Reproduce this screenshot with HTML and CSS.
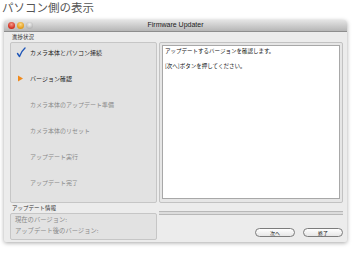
FILE: index.html
```html
<!DOCTYPE html>
<html lang="ja">
<head>
    <meta charset="UTF-8">
    <meta name="viewport" content="width=device-width, initial-scale=1.0">
    <title>パソコン側の表示</title>
    <link rel="stylesheet" href="styles.css">
</head>
<body>
    <h1 class="heading">パソコン側の表示</h1>

    <div class="window">
        <div class="titlebar">
            <div class="lights">
                <span class="light red"></span>
                <span class="light yellow"></span>
                <span class="light gray"></span>
            </div>
            <span class="title">Firmware Updater</span>
        </div>

        <div class="content">
            <div class="group-label">進捗状況</div>
            <div class="main">
                <ul class="steps">
                    <li class="step done">
                        <svg class="mark" width="10" height="11" viewBox="0 0 10 11">
                            <path d="M1.5 6.5 L3.5 9.5 Q5.5 4 9 1" fill="none" stroke="#1f56b8" stroke-width="1.4" stroke-linecap="round" stroke-linejoin="round"/>
                        </svg>
                        カメラ本体とパソコン接続
                    </li>
                    <li class="step current">
                        <svg class="mark" width="10" height="11" viewBox="0 0 10 11">
                            <path d="M2 2.5 L7 5.5 L2 8.5 Z" fill="#f08a1c"/>
                        </svg>
                        バージョン確認
                    </li>
                    <li class="step">カメラ本体のアップデート準備</li>
                    <li class="step">カメラ本体のリセット</li>
                    <li class="step">アップデート実行</li>
                    <li class="step">アップデート完了</li>
                </ul>

                <div class="message">
                    <div class="message-inner">
                        <p>アップデートするバージョンを確認します。</p>
                        <p>[次へ]ボタンを押してください。</p>
                    </div>
                </div>
            </div>

            <div class="bottom">
                <div class="info">
                    <div class="group-label">アップデート情報</div>
                    <div class="info-box">
                        <p>現在のバージョン:</p>
                        <p>アップデート後のバージョン:</p>
                    </div>
                </div>
                <div class="actions">
                    <div class="progress"></div>
                    <div class="buttons">
                        <button class="btn">次へ</button>
                        <button class="btn">終了</button>
                    </div>
                </div>
            </div>
        </div>
    </div>
</body>
</html>
```

FILE: styles.css
```css
body {
    margin: 0;
    background: #fff;
    font-family: "Noto Sans CJK JP", "Noto Sans", sans-serif;
    width: 353px;
    height: 253px;
    overflow: hidden;
}

.heading {
    margin: 0;
    padding: 0 0 0 2px;
    height: 20px;
    font-size: 11.5px;
    line-height: 14px;
    font-weight: normal;
    color: #555;
}

.window {
    margin-left: 4px;
    width: 343px;
    height: 222px;
    background: #ececec;
    border-radius: 4px 4px 2px 2px;
    box-shadow: 0 1px 4px rgba(0, 0, 0, 0.35);
    display: flex;
    flex-direction: column;
}

.titlebar {
    height: 11px;
    background: linear-gradient(#e4e4e4, #b6b6b6);
    border-bottom: 1px solid #8e8e8e;
    border-radius: 4px 4px 0 0;
    display: flex;
    align-items: center;
    position: relative;
}

.lights {
    display: flex;
    gap: 2px;
    padding-left: 4px;
}

.light {
    width: 7px;
    height: 7px;
    border-radius: 50%;
}

.light.red {
    background: radial-gradient(circle at 50% 35%, #f59a8a, #d0291b 70%);
}

.light.yellow {
    background: radial-gradient(circle at 50% 35%, #fbd98a, #e39a14 70%);
}

.light.gray {
    background: radial-gradient(circle at 50% 35%, #f0f0f0, #b5b5b5 70%);
}

.title {
    position: absolute;
    left: 0;
    right: 0;
    text-align: center;
    font-family: "Liberation Sans", sans-serif;
    font-size: 7px;
    color: #222;
    top: 1px;
}

.content {
    padding: 0 4px 0 6px;
    flex: 1;
    display: flex;
    flex-direction: column;
}

.group-label {
    font-size: 5.5px;
    line-height: 10px;
    height: 10px;
    color: #333;
    padding-left: 2px;
}

.main {
    display: grid;
    grid-template-columns: 147px 184px;
    gap: 2px;
    height: 161px;
}

.steps {
    list-style: none;
    margin: 0;
    padding: 1px 0 0;
    background: #e2e2e2;
    border: 1px solid #c6c6c6;
    border-radius: 2px;
}

.step {
    height: 26px;
    line-height: 18px;
    padding-left: 19px;
    font-size: 6px;
    color: #8a8a8a;
    position: relative;
}

.step.done,
.step.current {
    color: #1a1a1a;
}

.mark {
    position: absolute;
    left: 5px;
    top: 3px;
}

.message {
    background: #e6e6e6;
    border: 1px solid #c2c2c2;
    border-radius: 2px;
    padding: 2px 2px 3px;
}

.message-inner {
    height: 100%;
    box-sizing: border-box;
    background: #fff;
    border: 1px solid #a8a8a8;
    padding: 1px 2px;
}

.message-inner p {
    margin: 0 0 6px;
    font-size: 5.5px;
    line-height: 9px;
    color: #111;
}

.bottom {
    display: grid;
    grid-template-columns: 147px 184px;
    gap: 2px;
}

.info-box {
    background: #e2e2e2;
    border: 1px solid #c6c6c6;
    border-radius: 2px;
    height: 23px;
    padding: 1px 4px;
}

.info-box p {
    margin: 0;
    font-size: 6.3px;
    line-height: 10.5px;
    color: #8a8a8a;
}

.progress {
    margin-top: 8px;
    height: 2px;
    border-top: 1px solid #b8b8b8;
    border-bottom: 1px solid #b8b8b8;
    background: #dcdcdc;
}

.buttons {
    display: flex;
    justify-content: flex-end;
    gap: 8px;
    margin-top: 13px;
}

.btn {
    width: 40px;
    height: 9px;
    padding: 0;
    font-family: inherit;
    font-size: 5px;
    line-height: 7px;
    color: #222;
    background: linear-gradient(#ffffff, #e6e6e6);
    border: 1px solid #7c7c7c;
    border-radius: 5px;
}
```
